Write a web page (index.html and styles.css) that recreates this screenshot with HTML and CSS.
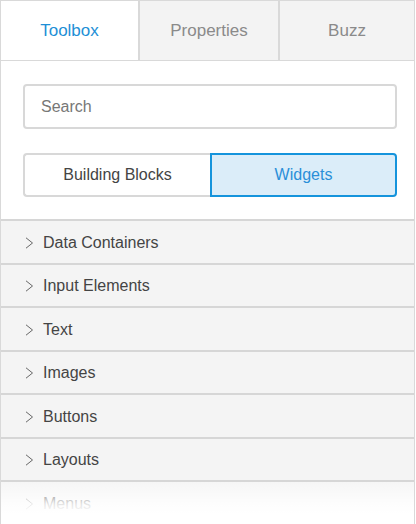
FILE: index.html
```html
<!DOCTYPE html>
<html>
<head>
<meta charset="utf-8">
<link rel="stylesheet" href="styles.css">
</head>
<body>
<div class="panel">
  <div class="tabs">
    <div class="tab active">Toolbox</div>
    <div class="tab">Properties</div>
    <div class="tab">Buzz</div>
  </div>
  <div class="controls">
    <div class="search">Search</div>
    <div class="toggle">
      <div class="opt">Building Blocks</div>
      <div class="opt selected">Widgets</div>
    </div>
  </div>
  <div class="list">
    <div class="row"><svg class="chev" width="9" height="12" viewBox="0 0 9 12"><polyline points="1,0.8 7.5,6 1,11.2" /></svg><span>Data Containers</span></div>
    <div class="row"><svg class="chev" width="9" height="12" viewBox="0 0 9 12"><polyline points="1,0.8 7.5,6 1,11.2" /></svg><span>Input Elements</span></div>
    <div class="row"><svg class="chev" width="9" height="12" viewBox="0 0 9 12"><polyline points="1,0.8 7.5,6 1,11.2" /></svg><span>Text</span></div>
    <div class="row"><svg class="chev" width="9" height="12" viewBox="0 0 9 12"><polyline points="1,0.8 7.5,6 1,11.2" /></svg><span>Images</span></div>
    <div class="row"><svg class="chev" width="9" height="12" viewBox="0 0 9 12"><polyline points="1,0.8 7.5,6 1,11.2" /></svg><span>Buttons</span></div>
    <div class="row"><svg class="chev" width="9" height="12" viewBox="0 0 9 12"><polyline points="1,0.8 7.5,6 1,11.2" /></svg><span>Layouts</span></div>
    <div class="row"><svg class="chev" width="9" height="12" viewBox="0 0 9 12"><polyline points="1,0.8 7.5,6 1,11.2" /></svg><span>Menus</span></div>
  </div>
  <div class="fade"></div>
</div>
</body>
</html>
```

FILE: styles.css
```css
html, body {
  margin: 0;
  padding: 0;
  background: #fff;
}
body {
  font-family: "Liberation Sans", Arial, sans-serif;
}
.panel {
  position: relative;
  width: 415px;
  height: 524px;
  box-sizing: border-box;
  border-left: 1px solid #d9d9d9;
  border-right: 1px solid #d9d9d9;
  overflow: hidden;
  background: #fff;
}
.tabs {
  display: grid;
  grid-template-columns: 137px 140px 1fr;
  border-top: 1px solid #d9d9d9;
  border-bottom: 1px solid #d9d9d9;
}
.tab {
  height: 59px;
  display: flex;
  align-items: center;
  justify-content: center;
  font-size: 17px;
  color: #8a8a8a;
  background: #f3f3f3;
}
.tab + .tab {
  border-left: 2px solid #d9d9d9;
}
.tab.active {
  background: #fff;
  color: #1e8fd6;
}
.controls {
  padding: 23px 17px 22px 22px;
  display: flex;
  flex-direction: column;
  gap: 24px;
}
.search {
  height: 41px;
  border: 2px solid #d8d8d8;
  border-radius: 4px;
  display: flex;
  align-items: center;
  padding-left: 16px;
  font-size: 16px;
  color: #777;
}
.toggle {
  display: grid;
  grid-template-columns: 1fr 1fr;
  height: 44px;
}
.opt {
  display: flex;
  align-items: center;
  justify-content: center;
  font-size: 16px;
  color: #444;
  border: 2px solid #d8d8d8;
  border-right: none;
  border-radius: 4px 0 0 4px;
}
.opt.selected {
  border: 2px solid #1594dc;
  border-radius: 0 4px 4px 0;
  background: #dbedf9;
  color: #2a8fd8;
}
.list {
  border-top: 2px solid #d6d6d6;
}
.row {
  height: 39.5px;
  padding-top: 2px;
  border-bottom: 2px solid #d6d6d6;
  background: #f4f4f4;
  display: flex;
  align-items: center;
  padding-left: 24px;
  font-size: 16px;
  color: #444;
}
.chev {
  margin-right: 9px;
}
.chev polyline {
  fill: none;
  stroke: #666;
  stroke-width: 1;
}
.fade {
  position: absolute;
  left: 0;
  right: 0;
  top: 482px;
  bottom: 0;
  background: linear-gradient(to bottom, rgba(255,255,255,0.15) 0px, rgba(255,255,255,0.85) 22px, #fff 32px);
}
```
